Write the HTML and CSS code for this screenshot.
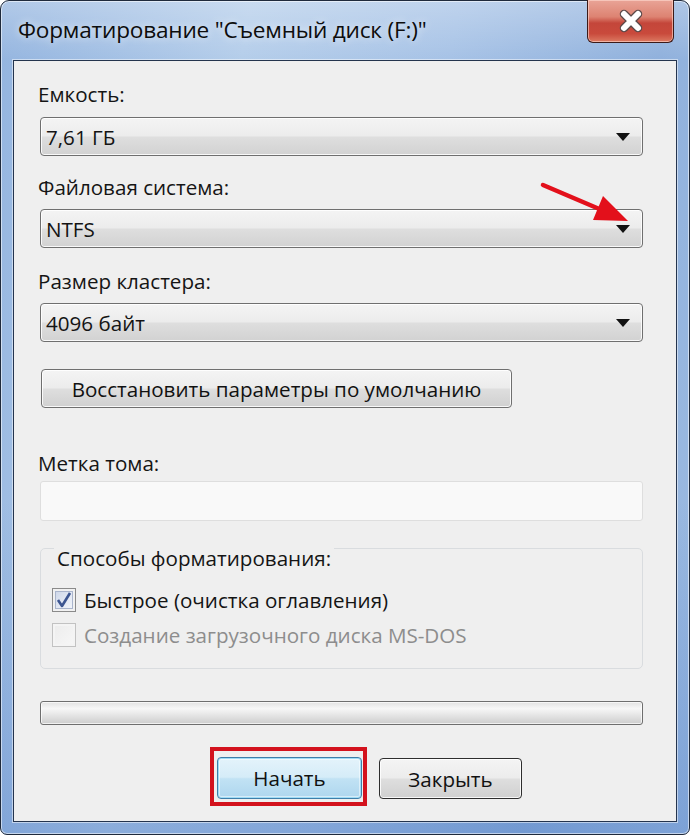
FILE: index.html
```html
<!DOCTYPE html>
<html lang="ru">
<head>
<meta charset="utf-8">
<title>Форматирование</title>
<link rel="stylesheet" href="styles.css">
</head>
<body>
<div class="window">
  <div class="titlebar">
    <div class="title">Форматирование "Съемный диск (F:)"</div>
    <div class="close">
      <svg width="32" height="24" viewBox="0 0 32 24">
        <path d="M9 5 L23 19 M23 5 L9 19" stroke="#5b4a4a" stroke-width="8.5" stroke-linecap="round"/>
        <path d="M9 5 L23 19 M23 5 L9 19" stroke="#ffffff" stroke-width="6" stroke-linecap="round"/>
      </svg>
    </div>
  </div>
  <div class="client">
    <div class="label l1">Емкость:</div>
    <div class="combo c1"><span>7,61 ГБ</span><i class="arrow"></i></div>
    <div class="label l2">Файловая система:</div>
    <div class="combo c2"><span>NTFS</span><i class="arrow"></i></div>
    <div class="label l3">Размер кластера:</div>
    <div class="combo c3"><span>4096 байт</span><i class="arrow"></i></div>
    <div class="btn restore">Восстановить параметры по умолчанию</div>
    <div class="label l4">Метка тома:</div>
    <div class="input"></div>
    <fieldset class="group">
      <legend>Способы форматирования:</legend>
      <div class="check-row">
        <span class="box checked">
          <svg width="22" height="22" viewBox="0 0 22 22"><path d="M5 11 L9 17 L17 4" fill="none" stroke="#3d5691" stroke-width="2.6" stroke-linejoin="round"/></svg>
        </span>
        <span class="ctext">Быстрое (очистка оглавления)</span>
      </div>
      <div class="check-row disabled">
        <span class="box"></span>
        <span class="ctext">Создание загрузочного диска MS-DOS</span>
      </div>
    </fieldset>
    <div class="progress"></div>
    <div class="actions">
      <div class="highlight"><div class="btn primary">Начать</div></div>
      <div class="btn close-btn">Закрыть</div>
    </div>
  </div>
  <svg class="red-arrow" width="690" height="836" viewBox="0 0 690 836">
    <line x1="543" y1="185" x2="604" y2="211" stroke="#e3101b" stroke-width="4.5" stroke-linecap="round"/>
    <polygon points="628,221 593,220 603,196" fill="#e3101b"/>
  </svg>
</div>
</body>
</html>
```
FILE: styles.css
```css
html, body {
  margin: 0;
  padding: 0;
  background: #ffffff;
}
body {
  width: 690px;
  height: 836px;
  overflow: hidden;
  font-family: "Open Sans", "Noto Sans", sans-serif;
  color: #141414;
}
.window {
  position: relative;
  box-sizing: border-box;
  width: 690px;
  height: 835px;
  border: 1px solid #1f2a3c;
  border-radius: 9px 9px 7px 7px;
  background:
    linear-gradient(180deg, rgba(255,255,255,0.28) 0px, rgba(255,255,255,0) 60px, rgba(60,110,190,0) 500px, rgba(60,110,190,0.35) 835px),
    linear-gradient(100deg, #93b4df 0%, #b4cdea 30%, #a6c2e6 55%, #8fb0dc 80%, #9fbde3 100%);
  display: flex;
  flex-direction: column;
  box-shadow: inset 0 0 0 1px rgba(255,255,255,0.55);
}
.titlebar {
  height: 59px;
  display: flex;
  align-items: flex-start;
  flex-shrink: 0;
}
.title {
  font-size: 22.6px;
  line-height: 28px;
  margin: 15px 0 0 17px;
  color: #0d0d0d;
  text-shadow: 0 0 8px rgba(255,255,255,0.8);
  letter-spacing: -0.2px;
}
.close {
  margin-left: auto;
  margin-right: 15px;
  margin-top: -1px;
  width: 87px;
  height: 43px;
  box-sizing: border-box;
  border: 1px solid #3b1a18;
  border-top: none;
  border-radius: 0 0 6px 6px;
  background: linear-gradient(180deg, #e9a497 0%, #dd8372 40%, #c4463a 55%, #c94a3c 80%, #dc7a62 100%);
  box-shadow: inset 0 0 0 1px rgba(255,220,210,0.6);
  display: flex;
  align-items: center;
  justify-content: center;
}
.client {
  flex: 1;
  margin: 0 12px 12px 12px;
  border: 1px solid #24344e;
  background: #efefef;
  display: flex;
  flex-direction: column;
  box-shadow: 0 0 0 1px rgba(255,255,255,0.5);
}
.label {
  font-size: 20.6px;
  line-height: 24px;
  margin-left: 24px;
  color: #151515;
}
.l1 { margin-top: 21px; }
.l2 { margin-top: 19px; }
.l3 { margin-top: 21px; }
.l4 { margin-top: 43px; }
.combo {
  box-sizing: border-box;
  height: 39px;
  margin: 11px 33px 0 26px;
  border: 1px solid #6f6f6f;
  border-radius: 4px;
  background: linear-gradient(180deg, #f4f4f4 0%, #ececec 48%, #dedede 52%, #d2d2d2 100%);
  box-shadow: inset 0 0 0 1px rgba(255,255,255,0.85);
  display: flex;
  align-items: center;
  padding: 0 12px 0 5px;
  font-size: 20.6px;
}
.c2, .c3 { margin-top: 10px; }
.combo span { flex: 1; }
.arrow {
  width: 0;
  height: 0;
  border-left: 7px solid transparent;
  border-right: 7px solid transparent;
  border-top: 8px solid #111;
}
.btn {
  box-sizing: border-box;
  border: 1px solid #6f6f6f;
  border-radius: 4px;
  background: linear-gradient(180deg, #f4f4f4 0%, #ececec 48%, #dedede 52%, #d0d0d0 100%);
  box-shadow: inset 0 0 0 1px rgba(255,255,255,0.85);
  display: flex;
  align-items: center;
  justify-content: center;
  font-size: 20.6px;
  color: #111;
}
.restore {
  width: 471px;
  height: 39px;
  margin: 27px 0 0 27px;
}
.input {
  box-sizing: border-box;
  height: 40px;
  margin: 6px 33px 0 26px;
  border: 1px solid #dedede;
  border-radius: 3px;
  background: #f9f9f9;
}
.group {
  margin: 5px 33px 0 26px;
  padding: 18px 0 0 11px;
  border: 1px solid #d9dcdf;
  border-radius: 5px;
  height: 143px;
  box-sizing: border-box;
  min-width: 0;
}
.group legend {
  font-size: 20.6px;
  line-height: 24px;
  padding: 20px 3px 0 3px;
  margin-left: 2px;
  color: #151515;
}
.check-row {
  display: flex;
  align-items: center;
  height: 24px;
  margin-bottom: 11px;
}
.box {
  box-sizing: border-box;
  width: 24px;
  height: 24px;
  border: 1px solid #8a8a8a;
  background: linear-gradient(135deg, #dcdcdc 0%, #f6f6f6 60%, #ffffff 100%);
  box-shadow: inset 0 0 0 2px #f4f4f4;
  display: flex;
  align-items: center;
  justify-content: center;
}
.box.checked {
  background: linear-gradient(135deg, #c9d3e6 0%, #e6ebf5 60%, #f6f8fb 100%);
  box-shadow: inset 0 0 0 2px #f1f1f1, inset 0 0 0 3px #aab5cc;
}
.ctext {
  font-size: 20.6px;
  line-height: 24px;
  margin-left: 8px;
  color: #141414;
}
.disabled .box {
  border-color: #c2c2c2;
  background: linear-gradient(135deg, #ececec 0%, #f7f7f7 100%);
  box-shadow: inset 0 0 0 2px #f4f4f4;
}
.disabled .ctext { color: #8d8d8d; }
.progress {
  box-sizing: border-box;
  height: 24px;
  margin: 32px 33px 0 26px;
  border: 1px solid #6e6e6e;
  border-radius: 3px;
  background: linear-gradient(180deg, #e2e2e2 0%, #f7f7f7 30%, #e8e8e8 55%, #cdcdcd 100%);
  box-shadow: inset 0 0 0 1px rgba(255,255,255,0.7);
}
.actions {
  display: flex;
  align-items: flex-start;
  margin: 22px 0 0 196px;
}
.highlight {
  border: 4px solid #d3121d;
  padding: 6px 1px 3px 3px;
}
.primary {
  width: 145px;
  height: 42px;
  border-color: #3e7ea9;
  background: linear-gradient(180deg, #e4f3fb 0%, #d5ecf8 48%, #c1e2f4 52%, #aed6ee 100%);
  box-shadow: inset 0 0 0 1px #9fdcf6, inset 0 0 0 2px rgba(255,255,255,0.5);
}
.close-btn {
  width: 143px;
  height: 41px;
  margin: 11px 0 0 12px;
  border-color: #2e2e2e;
}
.red-arrow {
  position: absolute;
  left: -1px;
  top: -1px;
  pointer-events: none;
}
```
